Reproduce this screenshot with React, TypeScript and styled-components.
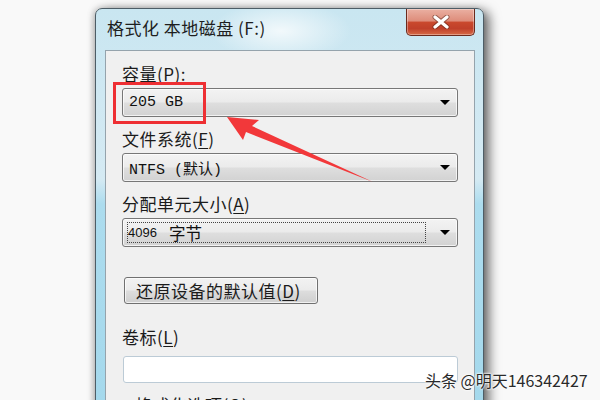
import React from "react";
import styled, { createGlobalStyle } from "styled-components";

const Global = createGlobalStyle`
  html, body {
    margin: 0;
    padding: 0;
    width: 600px;
    height: 400px;
    overflow: hidden;
    background: #f9f9f9;
  }
  #root { height: 400px; }
`;

const CJK = `"Noto Sans CJK SC", "Noto Sans", sans-serif`;
const MONO = `"Liberation Mono", "Noto Sans CJK SC", monospace`;

const Page = styled.div`
  position: relative;
  height: 400px;
  overflow: hidden;
  padding: 8px 0 0 95px;
  box-sizing: border-box;
  font-family: ${CJK};
  color: #1b1b1b;
`;

const Window = styled.div`
  width: 389px;
  height: 440px;
  box-sizing: border-box;
  border: 1px solid #4d5d66;
  border-radius: 7px 7px 0 0;
  padding: 0 8px 0 9px;
  display: flex;
  flex-direction: column;
  box-shadow: 5px 3px 12px rgba(0, 0, 0, 0.6), -2px 0 6px rgba(0, 0, 0, 0.18);
  background:
    radial-gradient(ellipse 70px 30px at 185px 22px, rgba(255, 255, 255, 0.75), rgba(255, 255, 255, 0) 100%),
    linear-gradient(to bottom, #c9e6f1 0px, #d5eaf3 170px, #acdcee 195px, #a3d8ec 100%);
`;

const TitleBar = styled.div`
  height: 41px;
  display: flex;
  justify-content: space-between;
  align-items: flex-start;
`;

const Title = styled.div`
  margin: 9px 0 0 2px;
  font-size: 17px;
  line-height: 20px;
  color: #1e1e1e;
  letter-spacing: 0.5px;
`;

const CloseButton = styled.div`
  width: 69px;
  height: 27px;
  box-sizing: border-box;
  border: 1px solid #6b2a1d;
  border-top: none;
  border-radius: 0 0 5px 5px;
  display: flex;
  align-items: center;
  justify-content: center;
  background: linear-gradient(
    to bottom,
    #eab0a2 0%,
    #de8d7b 45%,
    #c9482d 52%,
    #c0402a 75%,
    #d66a45 100%
  );
  box-shadow: inset 0 0 0 1px rgba(255, 255, 255, 0.35);
`;

const Client = styled.div`
  flex: 1;
  border: 1px solid #95a3ac;
  background: #f0f0f0;
  padding: 13px 16px 0 16px;
  display: flex;
  flex-direction: column;
`;

const Fields = styled.div`
  display: flex;
  flex-direction: column;
  gap: 12px;
`;

const Field = styled.div`
  display: flex;
  flex-direction: column;
  gap: 4px;
`;

const Label = styled.div<{ $mt?: number }>`
  font-size: 17px;
  line-height: 20px;
  letter-spacing: 0.5px;
  margin-top: ${(p) => p.$mt ?? 0}px;
`;

const U = styled.span`
  text-decoration: underline;
  text-underline-offset: 2px;
`;

const Combo = styled.div`
  height: 29px;
  box-sizing: border-box;
  border: 1px solid #777;
  border-radius: 3px;
  display: flex;
  align-items: center;
  padding: 0 7px 0 4px;
  background: linear-gradient(to bottom, #f3f3f3 0%, #ebebeb 48%, #dedede 52%, #d2d2d2 100%);
  box-shadow: inset 0 0 0 1px rgba(255, 255, 255, 0.7);
`;

const ComboText = styled.div<{ $focus?: boolean }>`
  flex: 1;
  height: 21px;
  display: flex;
  align-items: center;
  font-family: ${MONO};
  font-size: 15px;
  color: #111;
  white-space: pre;
  box-sizing: border-box;
  margin-right: 14px;
  border: 1px dotted ${(p) => (p.$focus ? "#444" : "transparent")};
  padding-left: ${(p) => (p.$focus ? 0 : 1)}px;
`;

const Num = styled.span`
  font-family: "Liberation Sans", sans-serif;
  font-size: 13px;
  margin-right: 12px;
`;

const CjkVal = styled.span`
  font-family: ${CJK};
  font-size: 16.5px;
`;

const Arrow = styled.div`
  width: 0;
  height: 0;
  border-left: 5px solid transparent;
  border-right: 5px solid transparent;
  border-top: 5px solid #000;
`;

const Button = styled.div`
  margin: 30px 0 0 2px;
  width: 194px;
  height: 27px;
  box-sizing: border-box;
  border: 1px solid #707070;
  border-radius: 3px;
  display: flex;
  align-items: center;
  padding-left: 11px;
  font-size: 17px;
  letter-spacing: 0.5px;
  white-space: nowrap;
  background: linear-gradient(to bottom, #f2f2f2 0%, #ebebeb 48%, #dddddd 52%, #cfcfcf 100%);
  box-shadow: inset 0 0 0 1px rgba(255, 255, 255, 0.7);
`;

const TextBox = styled.div`
  margin-top: 9px;
  margin-left: 1px;
  height: 27px;
  box-sizing: border-box;
  background: #fff;
  border: 1px solid #bccbd6;
  border-radius: 3px;
`;

const GroupLabel = styled.div`
  margin: 12px 0 0 13px;
  font-size: 17px;
  line-height: 20px;
  letter-spacing: 0.5px;
`;

const Highlight = styled.div`
  position: absolute;
  left: 113px;
  top: 82px;
  width: 93px;
  height: 42px;
  box-sizing: border-box;
  border: 3px solid #ee2f33;
`;

const Overlay = styled.svg`
  position: absolute;
  left: 0;
  top: 0;
  width: 600px;
  height: 400px;
  pointer-events: none;
`;

const Watermark = styled.div`
  position: absolute;
  left: 425px;
  top: 370px;
  font-family: ${CJK};
  font-size: 16px;
  line-height: 20px;
  color: #2a2a2a;
  white-space: nowrap;
  text-shadow: 0 0 2px #fff, 0 0 2px #fff, 0 0 3px #fff;
`;

export default function App() {
  return (
    <>
      <Global />
      <Page>
        <Window>
          <TitleBar>
            <Title>格式化 本地磁盘 (F:)</Title>
            <CloseButton>
              <svg width="20" height="14" viewBox="0 0 20 14">
                <path d="M4 2 L16 12 M16 2 L4 12" stroke="#5a2418" strokeWidth="5" strokeLinecap="round" opacity="0.55" />
                <path d="M4 2 L16 12 M16 2 L4 12" stroke="#fff" strokeWidth="3.2" strokeLinecap="round" />
              </svg>
            </CloseButton>
          </TitleBar>
          <Client>
            <Fields>
              <Field>
                <Label>容量(<U>P</U>):</Label>
                <Combo>
                  <ComboText>205 GB</ComboText>
                  <Arrow />
                </Combo>
              </Field>
              <Field>
                <Label>文件系统(<U>F</U>)</Label>
                <Combo>
                  <ComboText>NTFS (默认)</ComboText>
                  <Arrow />
                </Combo>
              </Field>
              <Field>
                <Label>分配单元大小(<U>A</U>)</Label>
                <Combo>
                  <ComboText $focus>
                    <Num>4096</Num>
                    <CjkVal>字节</CjkVal>
                  </ComboText>
                  <Arrow />
                </Combo>
              </Field>
            </Fields>
            <Button>还原设备的默认值(<U>D</U>)</Button>
            <Label $mt={23}>卷标(<U>L</U>)</Label>
            <TextBox />
            <GroupLabel>格式化选项(<U>O</U>)</GroupLabel>
          </Client>
        </Window>
        <Highlight />
        <Overlay viewBox="0 0 600 400">
          <polygon
            points="227,117 259,120 252,126 373,182 246,132 243,140"
            fill="#f2383a"
          />
        </Overlay>
        <Watermark>头条 @明天146342427</Watermark>
      </Page>
    </>
  );
}
